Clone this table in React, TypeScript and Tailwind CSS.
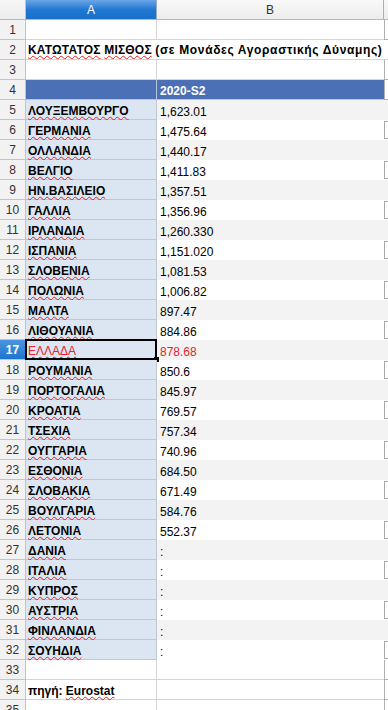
import React from "react";

type Row = { n: number; a?: string; b?: string; kind: "blank" | "title" | "head" | "data" | "src" };

const data: [string, string][] = [
  ["ΛΟΥΞΕΜΒΟΥΡΓΟ", "1,623.01"],
  ["ΓΕΡΜΑΝΙΑ", "1,475.64"],
  ["ΟΛΛΑΝΔΙΑ", "1,440.17"],
  ["ΒΕΛΓΙΟ", "1,411.83"],
  ["ΗΝ.ΒΑΣΙΛΕΙΟ", "1,357.51"],
  ["ΓΑΛΛΙΑ", "1,356.96"],
  ["ΙΡΛΑΝΔΙΑ", "1,260.330"],
  ["ΙΣΠΑΝΙΑ", "1,151.020"],
  ["ΣΛΟΒΕΝΙΑ", "1,081.53"],
  ["ΠΟΛΩΝΙΑ", "1,006.82"],
  ["ΜΑΛΤΑ", "897.47"],
  ["ΛΙΘΟΥΑΝΙΑ", "884.86"],
  ["ΕΛΛΑΔΑ", "878.68"],
  ["ΡΟΥΜΑΝΙΑ", "850.6"],
  ["ΠΟΡΤΟΓΑΛΙΑ", "845.97"],
  ["ΚΡΟΑΤΙΑ", "769.57"],
  ["ΤΣΕΧΙΑ", "757.34"],
  ["ΟΥΓΓΑΡΙΑ", "740.96"],
  ["ΕΣΘΟΝΙΑ", "684.50"],
  ["ΣΛΟΒΑΚΙΑ", "671.49"],
  ["ΒΟΥΛΓΑΡΙΑ", "584.76"],
  ["ΛΕΤΟΝΙΑ", "552.37"],
  ["ΔΑΝΙΑ", ":"],
  ["ΙΤΑΛΙΑ", ":"],
  ["ΚΥΠΡΟΣ", ":"],
  ["ΑΥΣΤΡΙΑ", ":"],
  ["ΦΙΝΛΑΝΔΙΑ", ":"],
  ["ΣΟΥΗΔΙΑ", ":"],
];

const rows: Row[] = [
  { n: 1, kind: "blank" },
  { n: 2, kind: "title" },
  { n: 3, kind: "blank" },
  { n: 4, kind: "head" },
  ...data.map(([a, b], i) => ({ n: i + 5, a, b, kind: "data" as const })),
  { n: 33, kind: "blank" },
  { n: 34, kind: "src" },
  { n: 35, kind: "blank" },
];

const squiggle = "underline decoration-wavy decoration-[#e02020] decoration-1 underline-offset-[1px]";

function Bracket() {
  return <div className="mt-[1px] h-[18px] w-[4px] border-l border-t border-b border-[#a8a8a8]" />;
}

export default function App() {
  return (
    <div className="w-[388px] h-[710px] overflow-hidden bg-white font-['Liberation_Sans',Arial,sans-serif] text-[12px] text-black">
      <div className="flex h-[20px] border-b border-[#b8b8b8]">
        <div className="w-[26px] shrink-0 border-r border-[#c0c0c0] bg-gradient-to-b from-[#f7f7f7] to-[#ececec]" />
        <div className="w-[131px] shrink-0 border-r border-[#9ab] bg-gradient-to-b from-[#6aa6e6] via-[#1f78d2] to-[#1a6fc8] flex items-center justify-center text-white text-[12px]">
          A
        </div>
        <div className="w-[227px] shrink-0 border-r border-[#b0b0b0] bg-gradient-to-b from-[#f9f9f9] to-[#ececec] flex items-center justify-center text-[#333]">
          B
        </div>
        <div className="flex-1 bg-gradient-to-b from-[#f9f9f9] to-[#ececec]" />
      </div>
      {rows.map((r) => {
        const sel = r.n === 17;
        const isData = r.kind === "data";
        const gray = isData && r.n % 2 === 1;
        const red = sel ? "text-[#e8222a]" : "";
        return (
          <div key={r.n} className="flex h-[20px]">
            <div
              className={`w-[26px] shrink-0 border-r border-b border-[#c4c4c4] flex items-center justify-center ${
                sel ? "bg-gradient-to-b from-[#4a95e0] to-[#1d74cf] text-white font-bold" : "bg-[#f2f2f2] text-[#333]"
              }`}
            >
              {r.n}
            </div>
            {r.kind === "title" ? (
              <div className="flex-1 flex items-end border-b border-[#d4d4d4] pl-[2px] pb-[2px] leading-[14px] font-bold whitespace-nowrap overflow-hidden">
                <span className="tracking-[0.2px]">
                  <span className={squiggle}>ΚΑΤΩΤΑΤΟΣ</span> <span className={squiggle}>ΜΙΣΘΟΣ</span>{" "}
                  <span className="tracking-[0.65px]">(σε Μονάδες Αγοραστικής Δύναμης)</span>
                </span>
              </div>
            ) : (
              <>
                <div
                  className={`relative w-[131px] shrink-0 flex items-end pl-[2px] pb-[1px] leading-[14px] whitespace-nowrap ${
                    r.kind === "head"
                      ? "bg-[#4c70b6] border-r border-b border-[#b8c4dc]"
                      : isData
                      ? "bg-[#dce6f2] border-r border-b border-[#c2c8d0]"
                      : "border-r border-b border-[#d4d4d4]"
                  } ${isData && !sel ? "font-bold" : ""} ${red}`}
                >
                  {r.kind === "data" && <span className={squiggle}>{r.a}</span>}
                  {r.kind === "src" && (
                    <span className="font-bold">
                      πηγή: <span className={squiggle}>Eurostat</span>
                    </span>
                  )}
                  {sel && (
                    <>
                      <div className="absolute -left-[1px] -top-[1px] right-[-1px] bottom-[-1px] border-2 border-black pointer-events-none" />
                      <div className="absolute -right-[3px] -bottom-[3px] w-[5px] h-[5px] bg-black" />
                    </>
                  )}
                </div>
                <div
                  className={`w-[227px] shrink-0 flex items-end pl-[3px] pb-[1px] leading-[14px] whitespace-nowrap ${
                    r.kind === "head"
                      ? "bg-[#4c70b6] text-white font-bold border-b border-[#b8c4dc]"
                      : isData
                      ? gray
                        ? "bg-[#f3f3f3]"
                        : "bg-white"
                      : "border-b border-[#d4d4d4]"
                  } ${red}`}
                >
                  {r.kind === "head" && "2020-S2"}
                  {isData && r.b}
                </div>
                <div className={`flex-1 ${isData ? (gray ? "bg-[#f3f3f3]" : "") : "border-l border-b border-[#b0b0b0]"}`}>
                  {isData && !gray && <Bracket />}
                </div>
              </>
            )}
          </div>
        );
      })}
    </div>
  );
}
